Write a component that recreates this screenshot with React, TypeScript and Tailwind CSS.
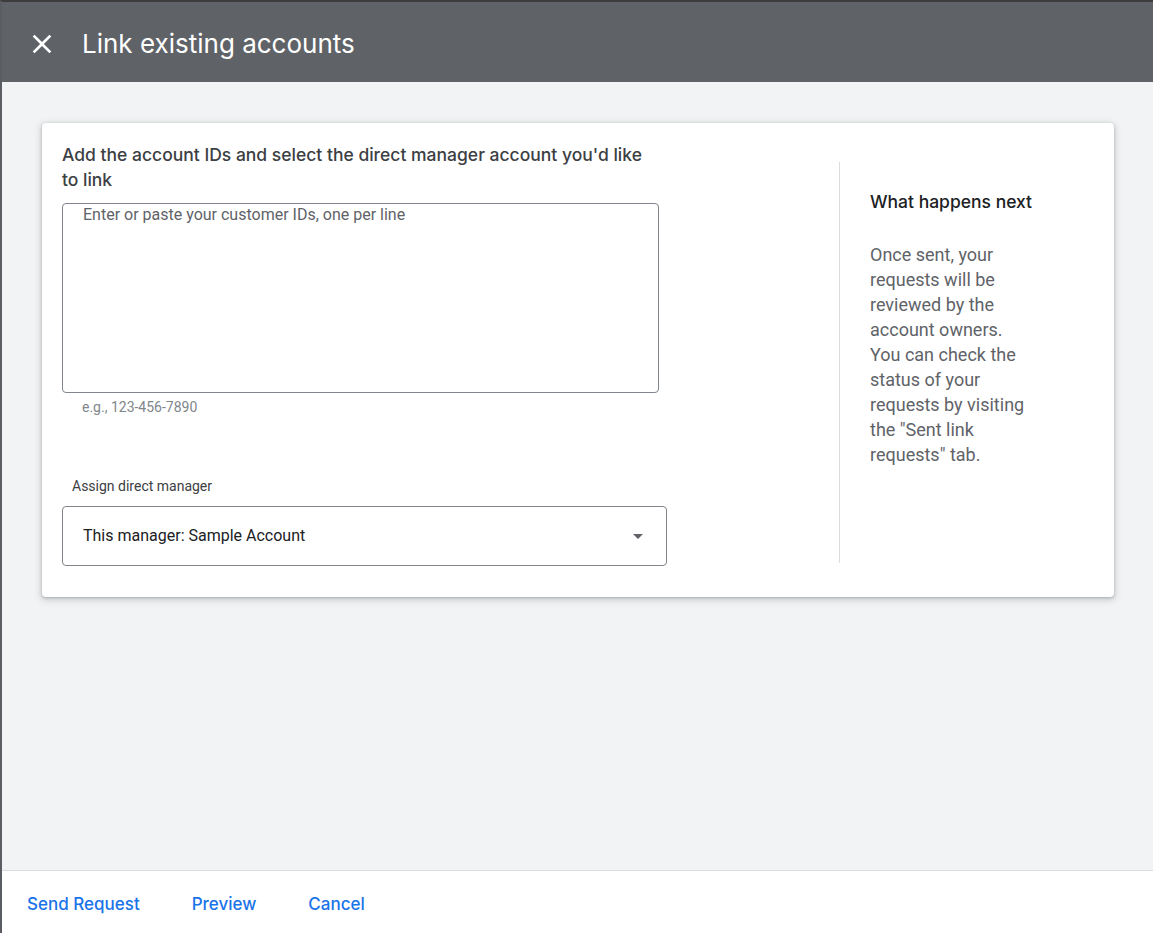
import React from 'react'

function CloseIcon() {
  return (
    <svg width="32" height="32" viewBox="0 0 24 24" fill="#ffffff" aria-hidden="true">
      <path d="M19 6.41L17.59 5 12 10.59 6.41 5 5 6.41 10.59 12 5 17.59 6.41 19 12 13.41 17.59 19 19 17.59 13.41 12z" />
    </svg>
  )
}

function DropArrow() {
  return (
    <svg width="24" height="24" viewBox="0 0 24 24" fill="#5f6368" aria-hidden="true">
      <path d="M7 10l5 5 5-5z" />
    </svg>
  )
}

export default function App() {
  return (
    <div className="w-[1153px] h-[933px] flex flex-col bg-[#f1f3f4] border-l-2 border-t-2 border-l-[#5a5e63] border-t-[#3c3c3c] overflow-hidden font-[Roboto,Arial,sans-serif]">
      {/* Header */}
      <header className="h-[80px] shrink-0 bg-[#5f6368] flex items-center pl-[24px] pt-[4px]">
        <button className="w-[32px] h-[32px] flex items-center justify-center" aria-label="Close">
          <CloseIcon />
        </button>
        <h1 className="ml-[24px] text-white text-[26px] leading-[32px] font-[Inter,Roboto,sans-serif]">
          Link existing accounts
        </h1>
      </header>

      {/* Body */}
      <main className="flex-1 pt-[41px] pl-[40px] pr-[39px]">
        <div className="bg-white rounded-[4px] shadow-[0_1px_3px_rgba(60,64,67,0.3),0_2px_6px_2px_rgba(60,64,67,0.15)] flex px-[20px] pt-[19px] pb-[31px]">
          <div className="w-[605px] flex flex-col">
            <h2 className="w-[592px] text-[17.5px] leading-[25px] text-[#3c4043] font-medium font-[Inter,Roboto,sans-serif]">
              Add the account IDs and select the direct manager account you'd like to link
            </h2>
            <div className="mt-[11px] w-[597px] h-[190px] border border-[#80868b] rounded-[4px] pl-[20px] pt-[1px]">
              <div className="text-[16px] leading-[20px] text-[#5f6368]">
                Enter or paste your customer IDs, one per line
              </div>
            </div>
            <div className="mt-[6px] pl-[20px] text-[14px] leading-[16px] text-[#80868b]">
              e.g., 123-456-7890
            </div>
            <div className="mt-[63px] pl-[10px] text-[14px] leading-[16px] text-[#3c4043]">
              Assign direct manager
            </div>
            <div className="mt-[12px] h-[60px] border border-[#80868b] rounded-[4px] flex items-center pl-[20px] pr-[16px]">
              <span className="flex-1 text-[16px] text-[#202124]">
                This manager: Sample Account
              </span>
              <DropArrow />
            </div>
          </div>

          <aside className="ml-auto w-[255px] mt-[20px] mb-[3px] border-l border-[#dadce0] pl-[30px] pt-[28px]">
            <h3 className="text-[17.5px] leading-[24px] text-[#202124] font-medium font-[Inter,Roboto,sans-serif]">
              What happens next
            </h3>
            <p className="mt-[28px] w-[158px] text-[18px] leading-[25px] text-[#5f6368]">
              Once sent, your requests will be reviewed by the account owners. You can check the status of your requests by visiting the "Sent link requests" tab.
            </p>
          </aside>
        </div>
      </main>

      {/* Footer */}
      <footer className="h-[63px] shrink-0 bg-white border-t border-[#dadce0] flex items-center pl-[25px] pt-[5px] gap-[52px] font-[Inter,Roboto,sans-serif]">
        <button className="text-[17px] text-[#1a73e8] font-medium">Send Request</button>
        <button className="text-[17px] text-[#1a73e8] font-medium">Preview</button>
        <button className="text-[17px] text-[#1a73e8] font-medium">Cancel</button>
      </footer>
    </div>
  )
}
